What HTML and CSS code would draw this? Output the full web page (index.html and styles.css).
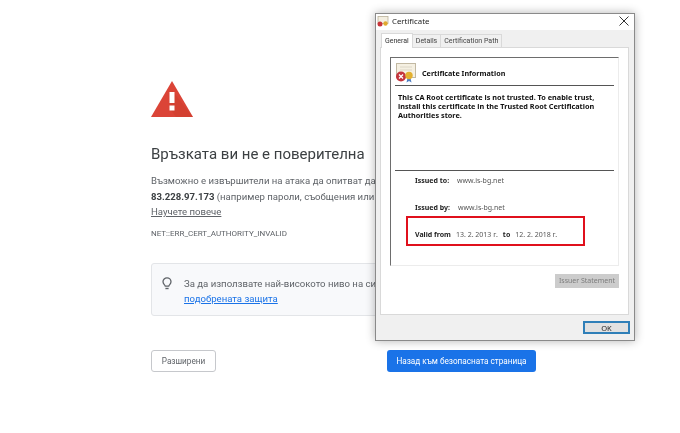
FILE: index.html
```html
<!DOCTYPE html>
<html lang="bg">
<head>
    <meta charset="UTF-8">
    <title>Грешка в поверителността</title>
    <link rel="stylesheet" href="styles.css">
</head>
<body>

<div class="interstitial">
    <svg class="warn-icon" width="42" height="36" viewBox="0 0 42 36">
        <path d="M21 0L42 36H0Z" fill="#db4437"/>
        <path d="M21 9.500L42 36H25L19 28Z" fill="#c53929" opacity="0.35"/>
        <rect x="18.500" y="11" width="5" height="11" fill="#fff"/>
        <rect x="18.500" y="24.500" width="5" height="5" fill="#fff"/>
    </svg>
    <h1>Връзката ви не е поверителна</h1>
    <p class="line">Възможно е извършители на атака да опитват да о</p>
    <p class="line"><b>83.228.97.173</b> (например пароли, съобщения или</p>
    <p class="line"><a class="learn" href="#">Научете повече</a></p>
    <p class="err-code">NET::ERR_CERT_AUTHORITY_INVALID</p>

    <div class="tip">
        <svg class="bulb" width="10" height="13" viewBox="0 0 10 13">
            <path d="M3.300 9.200C3.200 8 1 7.400 1 4.800a4 4 0 0 1 8 0C9 7.400 6.800 8 6.700 9.200Z" fill="none" stroke="#5f6368" stroke-width="1.300"/>
            <path d="M3.400 11.500h3.200" stroke="#5f6368" stroke-width="1.400"/>
        </svg>
        <div class="tip-text">
            <p>За да използвате най-високото ниво на сиг</p>
            <p><a class="tip-link" href="#">подобрената защита</a></p>
        </div>
    </div>

    <div class="actions">
        <button class="btn-adv">Разширени</button>
        <button class="btn-back">Назад към безопасната страница</button>
    </div>
</div>

<div class="cert-window">
    <div class="titlebar">
        <svg class="cert-small" width="12" height="11" viewBox="0 0 12 11">
            <rect x="1" y="0.500" width="10" height="7" fill="#f3eee0" stroke="#b9b09a" stroke-width="0.800"/>
            <circle cx="3" cy="8" r="2.500" fill="#c8343a"/>
            <circle cx="8.500" cy="7.500" r="2.200" fill="#e0a92e"/>
        </svg>
        <span class="title">Certificate</span>
        <svg class="close" width="10" height="10" viewBox="0 0 10 10">
            <path d="M0.500 0.500L9.500 9.500M9.500 0.500L0.500 9.500" stroke="#333" stroke-width="1"/>
        </svg>
    </div>
    <div class="tabs">
        <span class="tab active">General</span>
        <span class="tab">Details</span>
        <span class="tab">Certification Path</span>
    </div>
    <div class="tab-panel">
        <div class="info-box">
            <div class="info-head">
                <svg width="22" height="20" viewBox="0 0 22 20">
                    <rect x="1.500" y="0.500" width="19" height="14" fill="#f5f0e2" stroke="#c2b9a3"/>
                    <path d="M5 4h12M5 7h12" stroke="#dcd6c6"/>
                    <circle cx="6" cy="13.500" r="5" fill="#c4343c"/>
                    <path d="M4 11.500l4 4M8 11.500l-4 4" stroke="#fff" stroke-width="1.300"/>
                    <path d="M12.500 15l-1 4.500 2.500-1.500 2.500 1.500-1-4.500Z" fill="#4f7fc4"/>
                    <circle cx="14" cy="12.500" r="3.700" fill="#e3b02f"/>
                </svg>
                <span class="info-title">Certificate Information</span>
            </div>
            <p class="trust-msg">This CA Root certificate is not trusted. To enable trust, install this certificate in the Trusted Root Certification Authorities store.</p>
            <div class="issued">
                <div class="row"><b>Issued to:</b><span>www.is-bg.net</span></div>
                <div class="row row-by"><b>Issued by:</b><span>www.is-bg.net</span></div>
                <div class="row row-valid"><b>Valid from</b><span>13. 2. 2013 г.</span><b>to</b><span>12. 2. 2018 г.</span></div>
                <div class="highlight"></div>
            </div>
        </div>
        <div class="panel-actions">
            <span class="issuer-btn">Issuer Statement</span>
        </div>
    </div>
    <div class="cert-footer">
        <button class="ok-btn">OK</button>
    </div>
</div>

</body>
</html>
```

FILE: styles.css
```css
html, body {
    margin: 0;
    height: 433px;
    overflow: hidden;
    background: #fff;
}
body {
    font-family: Roboto, 'Open Sans', sans-serif;
    color: #5f6368;
    position: relative;
    filter: blur(0.3px);
}
p {
    margin: 0;
}
.interstitial {
    width: 385px;
    margin-left: 151px;
    padding-top: 81px;
}
.warn-icon {
    display: block;
}
h1 {
    margin: 27px 0 9px;
    font-size: 15px;
    line-height: 20px;
    font-weight: 400;
    color: #3c4043;
    white-space: nowrap;
}
.line {
    font-size: 9.600px;
    line-height: 15.500px;
    white-space: nowrap;
}
.line b {
    color: #3c4043;
}
.learn {
    color: #5f6368;
}
.err-code {
    margin-top: 7px;
    font-size: 8px;
    line-height: 14px;
}
.tip {
    display: flex;
    margin-top: 22px;
    height: 53px;
    box-sizing: border-box;
    padding: 12px 0 0 10px;
    background: #f8f9fb;
    border: 1px solid #e3e5e8;
    border-radius: 3px;
    font-size: 9.600px;
    line-height: 15px;
}
.bulb {
    margin-top: 1px;
    margin-right: 12px;
    flex: none;
}
.tip-text {
    white-space: nowrap;
}
.tip-link {
    color: #1a73e8;
}
.actions {
    display: flex;
    justify-content: space-between;
    margin-top: 34px;
}
.actions button {
    font-family: inherit;
    font-size: 8.200px;
    border-radius: 3px;
    height: 22px;
    padding: 0;
    white-space: nowrap;
}
.btn-adv {
    width: 65px;
    background: #fff;
    color: #5f6368;
    border: 1px solid #c6c8cc;
}
.btn-back {
    width: 149px;
    background: #1a73e8;
    color: #fff;
    border: none;
}

/* certificate dialog lies over the page */
.cert-window {
    position: absolute;
    left: 375px;
    top: 13px;
    width: 260px;
    height: 328px;
    box-sizing: border-box;
    display: flex;
    flex-direction: column;
    background: #f0f0f0;
    border: 1px solid #8a8a8a;
    box-shadow: 0 0 9px rgba(0, 0, 0, 0.3);
    font-family: 'Noto Sans', 'Open Sans', sans-serif;
    color: #111;
}
.titlebar {
    display: flex;
    align-items: center;
    height: 14px;
    padding: 0 4px 2px 1px;
    background: #fff;
    font-size: 7.800px;
}
.cert-small {
    margin-right: 3px;
}
.title {
    flex: 1;
    color: #222;
}
.close {
    margin-right: 1px;
}
.tabs {
    display: flex;
    align-items: flex-end;
    height: 17px;
    padding-left: 5px;
    background: #f0f0f0;
    font-family: Roboto, sans-serif;
    font-size: 7px;
}
.tab {
    height: 12px;
    line-height: 12px;
    padding: 0 3px;
    background: #f0f0f0;
    border: 1px solid #d9d9d9;
    border-bottom: none;
    margin-left: -1px;
    color: #444;
}
.tab.active {
    height: 14px;
    line-height: 14px;
    padding: 0 3px;
    background: #fff;
    margin-left: 0;
    position: relative;
    top: 1px;
    color: #333;
}
.tab-panel {
    height: 268px;
    box-sizing: border-box;
    margin: 0 5px 0 4px;
    padding: 9px 9px 0 9px;
    background: #fff;
    border: 1px solid #d9d9d9;
}
.info-box {
    height: 209px;
    box-sizing: border-box;
    padding: 0 4px;
    border-top: 1px solid #6d6d6d;
    border-left: 1px solid #6d6d6d;
    border-right: 1px solid #ececec;
    border-bottom: 1px solid #ececec;
}
.info-head {
    display: flex;
    align-items: center;
    height: 28px;
    padding-top: 3px;
    box-sizing: border-box;
    border-bottom: 1px solid #555;
}
.info-title {
    margin-left: 5px;
    font-size: 7.200px;
    font-weight: 700;
    color: #111;
}
.trust-msg {
    margin: 7px 0 0;
    padding-left: 3px;
    height: 77px;
    font-size: 7.300px;
    line-height: 9px;
    font-weight: 700;
    border-bottom: 1px solid #555;
}
.issued {
    position: relative;
    padding-left: 20px;
    font-size: 7px;
}
.row {
    display: flex;
    gap: 8px;
    height: 10px;
    line-height: 10px;
    margin-top: 5px;
}
.row b {
    color: #222;
}
.row span {
    color: #555;
}
.row-by,
.row-valid {
    margin-top: 17px;
}
.row-valid {
    gap: 5px;
}
.highlight {
    position: absolute;
    left: 11px;
    top: 40px;
    width: 179px;
    height: 30px;
    box-sizing: border-box;
    border: 2px solid #e0101c;
}
.panel-actions {
    display: flex;
    justify-content: flex-end;
    margin-top: 8px;
}
.issuer-btn {
    width: 64px;
    height: 14px;
    line-height: 14px;
    text-align: center;
    background: #ccc;
    color: #7c7c7c;
    font-size: 7px;
}
.cert-footer {
    display: flex;
    flex: 1;
    justify-content: flex-end;
    align-items: center;
    padding-right: 4px;
    background: #f0f0f0;
}
.ok-btn {
    width: 47px;
    height: 13px;
    padding: 0;
    font-family: inherit;
    font-size: 7.500px;
    font-weight: 400;
    background: #e1e1e1;
    border: 2px solid #2f7fb8;
    color: #222;
}
```
